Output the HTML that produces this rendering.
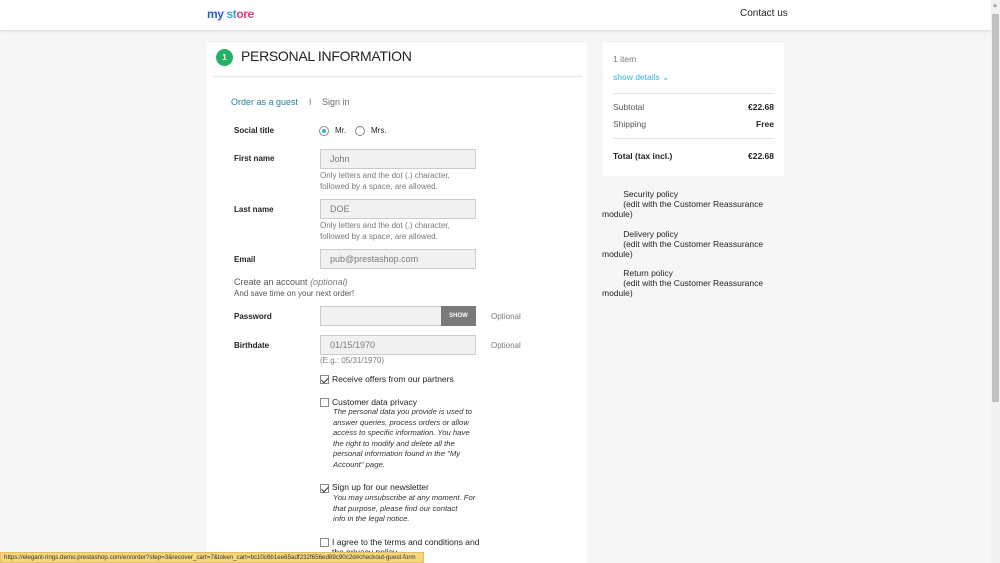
<!DOCTYPE html>
<html><head><meta charset="utf-8"><style>
*{margin:0;padding:0;box-sizing:border-box}
body{width:1000px;height:563px;overflow:hidden;background:#f6f6f6;font-family:"Liberation Sans",sans-serif;color:#232323;position:relative}
.a{position:absolute;white-space:nowrap}
.hdr{position:absolute;left:0;top:0;width:991px;height:30px;background:#fff;box-shadow:0 1px 3px rgba(0,0,0,.12)}
.card{position:absolute;background:#fff}
.lbl{font-size:8px;font-weight:bold;color:#232323}
.inp{position:absolute;left:320px;width:156px;height:20px;background:#f1f1f1;border:1px solid #ccc;font-size:9px;color:#7a7a7a;padding:4px 9px}
.hint{font-size:8px;color:#7a7a7a;line-height:11px}
.cb{position:absolute;width:9px;height:9px;border:1px solid #888;background:#fff}
.ck::after{content:"";position:absolute;left:2px;top:0px;width:3px;height:6px;border:solid #333;border-width:0 1px 1px 0;transform:rotate(45deg)}
.it{font-size:7.7px;font-style:italic;color:#333;line-height:10.5px}
.t8{font-size:8.5px;color:#232323}
.sb{position:absolute;left:991px;top:0;width:9px;height:563px;background:#f1f1f1}
</style></head><body>
<div class="hdr"></div>
<div class="a" style="left:207px;top:7px;font-size:12px;font-weight:bold;letter-spacing:-.4px"><span style="color:#2a5bd7">my</span> <span style="color:#3aa3d9">st</span><span style="color:#e03d6e">ore</span></div>
<div class="a" style="left:740px;top:8px;font-size:10px">Contact us</div>

<div class="card" style="left:207px;top:43px;width:380px;height:520px"></div>
<div class="a" style="left:216px;top:49px;width:17px;height:17px;border-radius:50%;background:#24b364;color:#fff;font-size:8px;font-weight:bold;text-align:center;line-height:17px">1</div>
<div class="a" style="left:241px;top:48px;font-size:14px;letter-spacing:-.3px">PERSONAL INFORMATION</div>
<div class="a" style="left:212px;top:76px;width:370px;height:1px;background:#e6e6e6"></div>
<div class="a" style="left:231px;top:97px;font-size:9px;color:#2b7d96">Order as a guest</div>
<div class="a" style="left:309px;top:97px;font-size:9px;color:#7a7a7a">I</div>
<div class="a" style="left:322px;top:97px;font-size:9px;color:#6a6a6a">Sign in</div>

<div class="a lbl" style="left:234px;top:126px">Social title</div>
<div class="a" style="left:319px;top:126px;width:10px;height:10px;border-radius:50%;border:1px solid #888;background:#fff"><div style="margin:2px;width:4px;height:4px;border-radius:50%;background:#2fb5d2"></div></div>
<div class="a t8" style="left:335px;top:126px;font-size:8px">Mr.</div>
<div class="a" style="left:355px;top:126px;width:10px;height:10px;border-radius:50%;border:1px solid #888;background:#fff"></div>
<div class="a t8" style="left:371px;top:126px;font-size:8px">Mrs.</div>

<div class="a lbl" style="left:234px;top:154px">First name</div>
<div class="inp" style="top:149px">John</div>
<div class="a hint" style="left:320px;top:170px">Only letters and the dot (.) character,<br>followed by a space, are allowed.</div>

<div class="a lbl" style="left:234px;top:205px">Last name</div>
<div class="inp" style="top:199px">DOE</div>
<div class="a hint" style="left:320px;top:220px">Only letters and the dot (.) character,<br>followed by a space, are allowed.</div>

<div class="a lbl" style="left:234px;top:255px">Email</div>
<div class="inp" style="top:249px">pub@prestashop.com</div>
<div class="a" style="left:234px;top:277px;font-size:9px;color:#555">Create an account <i style="color:#7a7a7a">(optional)</i></div>
<div class="a hint" style="left:234px;top:288px;color:#555">And save time on your next order!</div>

<div class="a lbl" style="left:234px;top:312px">Password</div>
<div class="inp" style="top:306px;width:122px"></div>
<div class="a" style="left:441px;top:306px;width:35px;height:20px;background:#7a7a7a;color:#fff;font-size:6px;font-weight:bold;text-align:center;line-height:20px">SHOW</div>
<div class="a hint" style="left:491px;top:311px">Optional</div>

<div class="a lbl" style="left:234px;top:341px">Birthdate</div>
<div class="inp" style="top:335px">01/15/1970</div>
<div class="a hint" style="left:491px;top:340px">Optional</div>
<div class="a hint" style="left:320px;top:355px">(E.g.: 05/31/1970)</div>

<div class="cb ck" style="left:320px;top:375px"></div>
<div class="a t8" style="left:332px;top:374px">Receive offers from our partners</div>

<div class="cb" style="left:320px;top:398px"></div>
<div class="a t8" style="left:332px;top:397px">Customer data privacy</div>
<div class="a it" style="left:333px;top:407px">The personal data you provide is used to<br>answer queries, process orders or allow<br>access to specific information. You have<br>the right to modify and delete all the<br>personal information found in the "My<br>Account" page.</div>

<div class="cb ck" style="left:320px;top:484px"></div>
<div class="a t8" style="left:332px;top:482px">Sign up for our newsletter</div>
<div class="a it" style="left:333px;top:493px">You may unsubscribe at any moment. For<br>that purpose, please find our contact<br>info in the legal notice.</div>

<div class="cb" style="left:320px;top:538px"></div>
<div class="a t8" style="left:332px;top:537px">I agree to the terms and conditions and<br>the privacy policy</div>

<div class="card" style="left:603px;top:43px;width:181px;height:133px"></div>
<div class="a hint" style="left:613px;top:54px;font-size:8.5px">1 item</div>
<div class="a" style="left:613px;top:72px;font-size:8.5px;color:#2fb5d2">show details &#8964;</div>
<div class="a" style="left:613px;top:93px;width:161px;height:1px;background:#e6e6e6"></div>
<div class="a" style="left:613px;top:102px;font-size:8.5px;color:#555">Subtotal</div>
<div class="a" style="left:730px;top:102px;width:44px;text-align:right;font-size:8.5px;font-weight:bold">€22.68</div>
<div class="a" style="left:613px;top:119px;font-size:8.5px;color:#555">Shipping</div>
<div class="a" style="left:730px;top:119px;width:44px;text-align:right;font-size:8.5px;font-weight:bold">Free</div>
<div class="a" style="left:613px;top:138px;width:161px;height:1px;background:#e6e6e6"></div>
<div class="a" style="left:613px;top:151px;font-size:8.5px;font-weight:bold">Total (tax incl.)</div>
<div class="a" style="left:730px;top:151px;width:44px;text-align:right;font-size:8.5px;font-weight:bold">€22.68</div>

<div class="a t8" style="left:602px;top:189px;line-height:10px">&nbsp;&nbsp;&nbsp;&nbsp;&nbsp;&nbsp;&nbsp;&nbsp;&nbsp;Security policy<br>&nbsp;&nbsp;&nbsp;&nbsp;&nbsp;&nbsp;&nbsp;&nbsp;&nbsp;(edit with the Customer Reassurance<br>module)</div>
<div class="a t8" style="left:602px;top:229px;line-height:10px">&nbsp;&nbsp;&nbsp;&nbsp;&nbsp;&nbsp;&nbsp;&nbsp;&nbsp;Delivery policy<br>&nbsp;&nbsp;&nbsp;&nbsp;&nbsp;&nbsp;&nbsp;&nbsp;&nbsp;(edit with the Customer Reassurance<br>module)</div>
<div class="a t8" style="left:602px;top:268px;line-height:10px">&nbsp;&nbsp;&nbsp;&nbsp;&nbsp;&nbsp;&nbsp;&nbsp;&nbsp;Return policy<br>&nbsp;&nbsp;&nbsp;&nbsp;&nbsp;&nbsp;&nbsp;&nbsp;&nbsp;(edit with the Customer Reassurance<br>module)</div>

<div class="a" style="left:0;top:552px;width:424px;height:11px;background:#f5d77e;border:1px solid #e0c060;font-size:6.2px;color:#333;padding-left:3px;line-height:9px;overflow:hidden">https://elegant-rings.demo.prestashop.com/en/order?step=3&amp;recover_cart=7&amp;token_cart=bc10c6b1ee65adf232f656ed89c90c2d#checkout-guest-form</div>

<div class="sb"><div style="position:absolute;left:1px;top:14px;width:7px;height:388px;background:#c1c1c1"></div><div style="position:absolute;left:2px;top:3px;width:0;height:0;border-left:2.5px solid transparent;border-right:2.5px solid transparent;border-bottom:4px solid #a3a3a3"></div></div>
</body></html>
